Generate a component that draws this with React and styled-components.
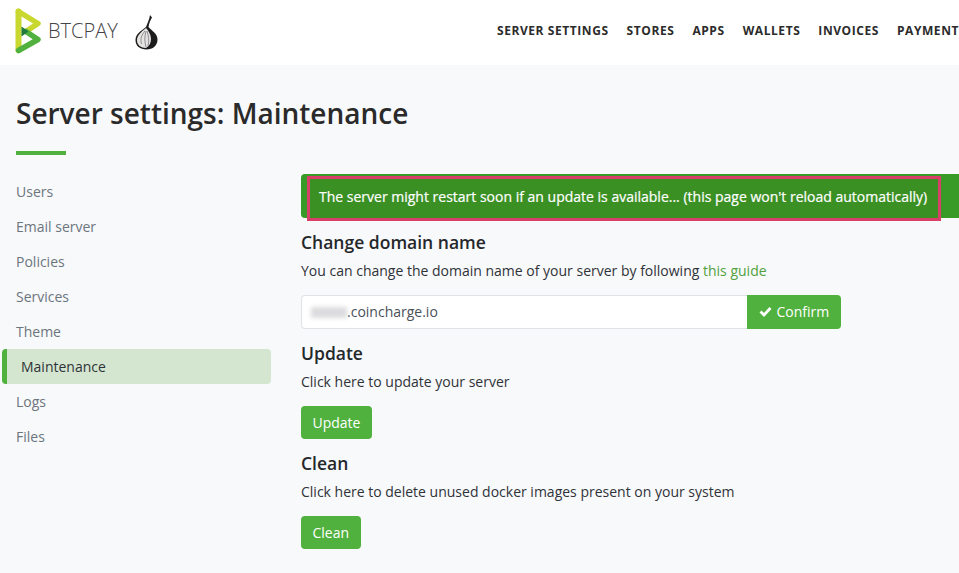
import React from 'react';
import styled, { createGlobalStyle } from 'styled-components';

const GlobalStyle = createGlobalStyle`
  html, body {
    margin: 0;
    padding: 0;
    height: 100%;
    overflow: hidden;
    background: #f8f9fb;
  }
  body {
    font-family: "Open Sans", "Liberation Sans", sans-serif;
    color: #212529;
  }
`;

const Page = styled.div`
  width: 959px;
  height: 573px;
  overflow: hidden;
`;

const Navbar = styled.header`
  display: flex;
  align-items: center;
  justify-content: space-between;
  box-sizing: border-box;
  height: 65px;
  padding: 0 0 4px 15px;
  background: #fff;
  overflow: hidden;
`;

const Brand = styled.div`
  display: flex;
  align-items: center;
`;

const BrandName = styled.span`
  margin-left: 6px;
  font-size: 20px;
  font-weight: 300;
  color: #444;
`;

const Onion = styled.svg`
  margin: 3px 0 0 17px;
`;

const NavLinks = styled.nav`
  display: flex;
  flex-shrink: 0;
  gap: 18px;
`;

const NavLink = styled.a`
  font-size: 12px;
  font-weight: 700;
  letter-spacing: 0.57px;
  color: #2b2b2b;
  white-space: nowrap;
`;

const Content = styled.main`
  padding: 31px 0 0 16px;
`;

const Title = styled.h1`
  margin: 0;
  font-size: 28px;
  line-height: 34px;
  font-weight: 600;
  color: #2a2a2a;
`;

const Divider = styled.hr`
  width: 50px;
  height: 4px;
  margin: 21px 0 19px;
  border: 0;
  background: #51b13e;
`;

const Columns = styled.div`
  display: grid;
  grid-template-columns: 269px 1fr;
  column-gap: 30px;
  margin-left: -14px;
`;

const SideNav = styled.nav`
  display: flex;
  flex-direction: column;
`;

const SideItem = styled.a`
  display: flex;
  align-items: center;
  height: 35px;
  padding-left: 14px;
  border-radius: 4px;
  font-size: 14px;
  color: ${p => (p.$active ? '#2f3338' : '#6c757d')};
  ${p => p.$active && `
    background: #d4e6d0;
    border-left: 5px solid #51b13e;
    box-sizing: border-box;
  `}
`;

const Main = styled.section`
  display: flex;
  flex-direction: column;
  width: 658px;
`;

const Banner = styled.div`
  position: relative;
  display: flex;
  align-items: center;
  box-sizing: border-box;
  height: 44px;
  padding-left: 18px;
  border-radius: 4px 0 0 4px;
  background: #389b28;
  font-size: 14px;
  font-weight: 510;
  color: #fff;
  white-space: nowrap;
`;

const BannerText = styled.span`
  position: relative;
  z-index: 1;
  -webkit-text-stroke: 0.2px #fff;
`;

const Highlight = styled.span`
  position: absolute;
  left: 6px;
  top: 2px;
  width: 634px;
  height: 45px;
  box-sizing: border-box;
  border: 3px solid #d8406a;
  background: #3b9024;
`;

const Heading = styled.h2`
  margin: 0;
  font-size: 17.5px;
  line-height: 24px;
  font-weight: 600;
  color: #25282b;
`;

const Block = styled.div`
  display: flex;
  flex-direction: column;
  align-items: flex-start;
  margin-top: 12px;
`;

const Text = styled.p`
  margin: 7px 0 0;
  font-size: 14px;
  line-height: 20px;
  color: #2f3338;
`;

const GuideLink = styled.a`
  color: #51a13e;
`;

const DomainRow = styled.div`
  display: flex;
  margin-top: 14px;
`;

const DomainInput = styled.div`
  display: flex;
  align-items: center;
  box-sizing: border-box;
  width: 446px;
  height: 34px;
  padding: 0 0 2px 9px;
  border: 1px solid #dfe2e6;
  border-right: 0;
  border-radius: 4px 0 0 4px;
  background: #fff;
  font-size: 14px;
  color: #495057;
`;

const Blur = styled.span`
  display: inline-block;
  width: 36px;
  height: 11px;
  margin-top: 2px;
  background: #dcdcde;
  filter: blur(2px);
`;

const Button = styled.button`
  display: inline-flex;
  align-items: center;
  gap: 5px;
  height: ${p => (p.$attached ? '34px' : '33px')};
  padding: 0 ${p => (p.$attached ? '11.5px' : '11.5px')} ${p => (p.$attached ? '2px' : '0')};
  border: 0;
  border-radius: ${p => (p.$attached ? '0 4px 4px 0' : '4px')};
  background: #51b13e;
  font-family: inherit;
  font-size: 14px;
  font-weight: 500;
  color: #fff;
  ${p => p.$below && 'margin-top: 14px;'}
`;

const links = ['SERVER SETTINGS', 'STORES', 'APPS', 'WALLETS', 'INVOICES', 'PAYMENT'];
const sideItems = ['Users', 'Email server', 'Policies', 'Services', 'Theme', 'Maintenance', 'Logs', 'Files'];

const Logo = () => (
  <svg width="27" height="46" viewBox="0 0 27 46">
    <path d="M3.5 3.5 L3.5 42" stroke="#c9d82f" strokeWidth="6" strokeLinecap="round" />
    <path d="M3.5 3.5 L23 15.5 L11 23.5" fill="none" stroke="#c9d82f" strokeWidth="5.5" strokeLinejoin="round" strokeLinecap="round" />
    <path d="M11 23.5 L23 31.5 L3.5 42.5" fill="none" stroke="#51b13e" strokeWidth="5.5" strokeLinejoin="round" strokeLinecap="round" />
    <path d="M6.5 18.5 L13.5 23.5 L6.5 28.5 Z" fill="#1f7a3c" />
  </svg>
);

const OnionIcon = () => (
  <Onion width="23" height="35" viewBox="0 0 23 35">
    <path d="M15 0 C14.5 4 12.5 8 11 12 C6 16 0.5 19 0.5 25 C0.5 31 5 34.5 11.5 34.5 C18 34.5 22.5 30.5 22.5 24.5 C22.5 18.5 17 16 13.5 12 C14 8 15.5 5 17 2.5 Z" fill="#1c1c1c" />
    <path d="M11 13 C6.5 17 2 20 2 25.5 C2 30 6 33 11 33 C14.5 31 16 28 16 24 C16 19.5 13.5 16 11 13 Z" fill="#e6e4e2" />
    <path d="M10 16 C6.5 20 5 24 6.5 29 M11 16 C9.5 21 9.5 27 11 32 M12 16 C13.5 21 14.5 26 13 31" fill="none" stroke="#77757a" strokeWidth="0.8" />
  </Onion>
);

const CheckIcon = () => (
  <svg width="13" height="11" viewBox="0 0 13 11">
    <path d="M1.5 5.5 L5 9 L11.5 2" fill="none" stroke="#fff" strokeWidth="2.8" />
  </svg>
);

export default function App() {
  return (
    <Page>
      <GlobalStyle />
      <Navbar>
        <Brand>
          <Logo />
          <BrandName>BTCPAY</BrandName>
          <OnionIcon />
        </Brand>
        <NavLinks>
          {links.map(l => <NavLink key={l}>{l}</NavLink>)}
        </NavLinks>
      </Navbar>
      <Content>
        <Title>Server settings: Maintenance</Title>
        <Divider />
        <Columns>
          <SideNav>
            {sideItems.map(s => <SideItem key={s} $active={s === 'Maintenance'}>{s}</SideItem>)}
          </SideNav>
          <Main>
            <Banner>
              <Highlight />
              <BannerText>The server might restart soon if an update is available... (this page won't reload automatically)</BannerText>
            </Banner>
            <Block>
              <Heading>Change domain name</Heading>
              <Text>You can change the domain name of your server by following <GuideLink>this guide</GuideLink></Text>
              <DomainRow>
                <DomainInput><Blur />.coincharge.io</DomainInput>
                <Button $attached><CheckIcon />Confirm</Button>
              </DomainRow>
            </Block>
            <Block>
              <Heading>Update</Heading>
              <Text>Click here to update your server</Text>
              <Button $below>Update</Button>
            </Block>
            <Block>
              <Heading>Clean</Heading>
              <Text>Click here to delete unused docker images present on your system</Text>
              <Button $below>Clean</Button>
            </Block>
          </Main>
        </Columns>
      </Content>
    </Page>
  );
}
